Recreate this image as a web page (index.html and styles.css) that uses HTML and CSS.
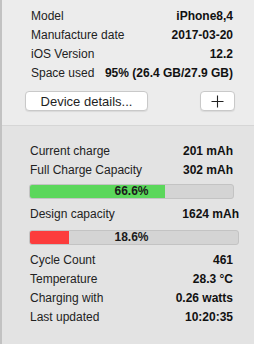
FILE: index.html
```html
<!DOCTYPE html>
<html lang="en">
<head>
  <meta charset="UTF-8" />
  <title>Battery info</title>
  <link rel="stylesheet" href="styles.css">
</head>
<body>
<main class="panel">
  <!-- Device info -->
  <section class="device">
    <div class="row"><span>Model</span><b>iPhone8,4</b></div>
    <div class="row"><span>Manufacture date</span><b>2017-03-20</b></div>
    <div class="row"><span>iOS Version</span><b>12.2</b></div>
    <div class="row"><span>Space used</span><b>95% (26.4 GB/27.9 GB)</b></div>
    <div class="actions">
      <button class="btn btn-details" type="button">Device details...</button>
      <button class="btn btn-add" type="button" aria-label="Add">
        <svg width="13" height="13" viewBox="0 0 13 13"><path d="M6.5 0.5v12M0.5 6.5h12" stroke="#222" stroke-width="1.1" fill="none"/></svg>
      </button>
    </div>
  </section>

  <!-- Battery -->
  <section class="battery">
    <div class="row"><span>Current charge</span><b>201 mAh</b></div>
    <div class="row"><span>Full Charge Capacity</span><b>302 mAh</b></div>
    <div class="bar"><div class="fill green" style="width: 66.6%"></div><span class="bar-label">66.6%</span></div>
    <div class="row row-wide gap"><span>Design capacity</span><b>1624 mAh</b></div>
    <div class="bar bar-wide"><div class="fill red" style="width: 18.6%"></div><span class="bar-label">18.6%</span></div>
    <div class="row gap"><span>Cycle Count</span><b>461</b></div>
    <div class="row"><span>Temperature</span><b>28.3 °C</b></div>
    <div class="row"><span>Charging with</span><b>0.26 watts</b></div>
    <div class="row"><span>Last updated</span><b>10:20:35</b></div>
  </section>
</main>
</body>
</html>
```
FILE: styles.css
```css
* { box-sizing: border-box; margin: 0; padding: 0; }
body {
  width: 254px; height: 344px; overflow: hidden;
  font-family: "Liberation Sans", Arial, sans-serif;
  font-size: 12px;
  color: #1e1e1e;
  background: #e4e4e4;
}
.panel {
  height: 344px;
  border-left: 2px solid #c2c2c2;
  display: flex; flex-direction: column;
}
.row {
  display: flex; justify-content: space-between; align-items: center;
  height: 19px; line-height: 19px;
}
.row span { color: #222; }
.row b { font-weight: bold; color: #111; }

/* top part */
.device {
  background: #ececec;
  padding: 7px 21px 14px 29px;
  border-bottom: 1px solid #d6d6d6;
}
.actions {
  display: flex; justify-content: space-between;
  margin-top: 8px; padding-left: 0; margin-left: -6px; margin-right: -2px;
}
.btn {
  height: 20px;
  background: #fff;
  border: 1px solid #c9c9c9;
  border-radius: 4px;
  box-shadow: 0 1px 1px rgba(0,0,0,0.08);
  font-family: inherit; color: #1e1e1e;
  display: flex; align-items: center; justify-content: center;
}
.btn-details { width: 123px; font-size: 13px; }
.btn-add { width: 35px; }

/* bottom part */
.battery {
  flex: 1;
  background: #e3e3e3;
  padding: 16px 20px 0 27px;
}
.battery .row { padding: 0 1px 0 1px; }
.row.gap { margin-top: 6px; }
.row-wide { margin-right: -6px; }
.bar {
  position: relative;
  height: 15px; margin-top: 4px;
  background: #d4d4d4;
  border: 1px solid #c3c3c3;
  border-radius: 3px;
  overflow: hidden;
}
.bar-wide { margin-right: -5px; margin-top: 6px; }
.fill { height: 100%; }
.fill.green { background: #5bd75b; }
.fill.red { background: #fc3c3c; }
.bar-label {
  position: absolute; left: 0; right: 0; top: 0;
  text-align: center; line-height: 13px;
  font-weight: bold; font-size: 12px; color: #1a1a1a;
}
.bar-wide .bar-label { right: 5px; }
```
